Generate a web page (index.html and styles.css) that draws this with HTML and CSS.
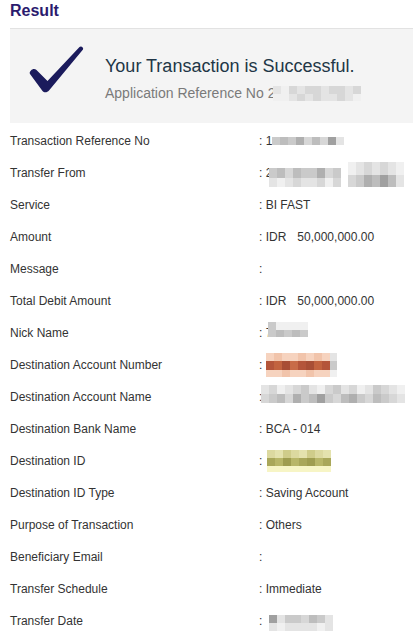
FILE: index.html
```html
<!DOCTYPE html>
<html>
<head>
<meta charset="utf-8">
<link rel="stylesheet" href="styles.css">
</head>
<body>
<div class="page">
  <h1 class="title">Result</h1>
  <div class="banner">
    <svg class="check" width="58" height="50" viewBox="0 0 58 50">
      <path d="M3,25.5 C4.5,23.5 7,23.5 8.5,25 L19.5,36 L51.5,2 C53,0.5 56,2.5 55,4.5 L21,45.5 C19.5,47.5 16,48 14.5,46 L2,29 C1.2,27.8 2,26.5 3,25.5 Z" fill="#1b1b5c"/>
    </svg>
    <div class="msg">
      <div class="msg-title">Your Transaction is Successful.</div>
      <div class="msg-sub">Application Reference No 2<span class="pix px-app"><span class="grid"><i class="b"></i><i class="a"></i><i class="c"></i><i class="b"></i><i class="c"></i><i class="c"></i><i class="b"></i><i class="c"></i><i class="c"></i><i class="b"></i><i class="c"></i><i class="a"></i><i class="a"></i><i class="b"></i><i class="c"></i><i class="b"></i><i class="c"></i><i class="b"></i><i class="b"></i><i class="c"></i><i class="b"></i><i class="a"></i></span></span></div>
    </div>
  </div>

  <div class="rows">
    <div class="row"><div class="label">Transaction Reference No</div><div class="value">: 1<span class="pix px-trn"><span class="grid"><i class="d"></i><i class="e"></i><i class="d"></i><i class="f"></i><i class="c"></i><i class="e"></i><i class="c"></i><i class="g"></i><i class="b"></i></span></span></div></div>

    <div class="row"><div class="label">Transfer From</div><div class="value">: 2<span class="pix px-tfa"><span class="grid"><i class="d"></i><i class="e"></i><i class="c"></i><i class="e"></i><i class="d"></i><i class="d"></i><i class="f"></i><i class="c"></i><i class="d"></i><i class="b"></i><i class="a"></i><i class="b"></i><i class="c"></i><i class="b"></i><i class="b"></i><i class="c"></i><i class="a"></i><i class="c"></i></span></span><span class="pix px-tfb"><span class="grid"><i class="a"></i><i class="b"></i><i class="c"></i><i class="b"></i><i class="c"></i><i class="b"></i><i class="a"></i><i class="c"></i><i class="d"></i><i class="f"></i><i class="e"></i><i class="g"></i><i class="e"></i><i class="b"></i></span></span></div></div>

    <div class="row"><div class="label">Service</div><div class="value">: BI FAST</div></div>

    <div class="row"><div class="label">Amount</div><div class="value">: IDR<span class="amt">50,000,000.00</span></div></div>

    <div class="row"><div class="label">Message</div><div class="value">:</div></div>

    <div class="row"><div class="label">Total Debit Amount</div><div class="value">: IDR<span class="amt">50,000,000.00</span></div></div>

    <div class="row"><div class="label">Nick Name</div><div class="value">: 7<span class="pix px-nick"><span class="grid"><i class="d"></i><i class="a"></i><i class="a"></i><i class="a"></i><i class="a"></i><i class="d"></i><i class="e"></i><i class="d"></i><i class="e"></i><i class="d"></i></span></span></div></div>

    <div class="row"><div class="label">Destination Account Number</div><div class="value">: <span class="pix px-accno"><span class="grid"><i class="pk1"></i><i class="pk2"></i><i class="pk1"></i><i class="pk1"></i><i class="pk2"></i><i class="pk1"></i><i class="pk2"></i><i class="pk1"></i><i class="b"></i><i class="br1"></i><i class="br2"></i><i class="br3"></i><i class="br4"></i><i class="br1"></i><i class="br3"></i><i class="br2"></i><i class="br1"></i><i class="d"></i><i class="pk1"></i><i class="pk1"></i><i class="pk2"></i><i class="pk1"></i><i class="pk1"></i><i class="pk2"></i><i class="pk1"></i><i class="pk1"></i><i class="a"></i></span></span></div></div>

    <div class="row"><div class="label">Destination Account Name</div><div class="value">:<span class="pix px-accname"><span class="grid"><i class="b"></i><i class="c"></i><i class="a"></i><i class="b"></i><i class="c"></i><i class="d"></i><i class="b"></i><i class="a"></i><i class="c"></i><i class="d"></i><i class="b"></i><i class="c"></i><i class="a"></i><i class="b"></i><i class="d"></i><i class="c"></i><i class="b"></i><i class="a"></i><i class="c"></i><i class="d"></i><i class="e"></i><i class="c"></i><i class="f"></i><i class="d"></i><i class="e"></i><i class="g"></i><i class="d"></i><i class="c"></i><i class="e"></i><i class="f"></i><i class="d"></i><i class="c"></i><i class="e"></i><i class="d"></i><i class="c"></i><i class="b"></i></span></span></div></div>

    <div class="row"><div class="label">Destination Bank Name</div><div class="value">: BCA - 014</div></div>

    <div class="row"><div class="label">Destination ID</div><div class="value">: <span class="pix px-id"><span class="grid"><i class="y1"></i><i class="y2"></i><i class="y3"></i><i class="y1"></i><i class="y2"></i><i class="y3"></i><i class="y1"></i><i class="y2"></i><i class="ol1"></i><i class="ol2"></i><i class="ol3"></i><i class="ol2"></i><i class="ol1"></i><i class="ol3"></i><i class="ol2"></i><i class="ol1"></i><i class="py"></i><i class="py"></i><i class="py"></i><i class="py"></i><i class="py"></i><i class="py"></i><i class="py"></i><i class="py"></i></span></span></div></div>

    <div class="row"><div class="label">Destination ID Type</div><div class="value">: Saving Account</div></div>

    <div class="row"><div class="label">Purpose of Transaction</div><div class="value">: Others</div></div>

    <div class="row"><div class="label">Beneficiary Email</div><div class="value">:</div></div>

    <div class="row"><div class="label">Transfer Schedule</div><div class="value">: Immediate</div></div>

    <div class="row"><div class="label">Transfer Date</div><div class="value">: <span class="pix px-date"><span class="grid"><i class="g"></i><i class="b"></i><i class="d"></i><i class="d"></i><i class="c"></i><i class="e"></i><i class="d"></i><i class="b"></i><i class="b"></i><i class="a"></i><i class="b"></i><i class="b"></i><i class="b"></i><i class="b"></i><i class="a"></i><i class="b"></i></span></span></div></div>
  </div>
</div>
</body>
</html>
```

FILE: styles.css
```css
html, body {
  margin: 0;
  padding: 0;
  background: #ffffff;
}

body {
  font-family: "Liberation Sans", Arial, sans-serif;
  color: #333333;
  overflow: hidden;
}

.page {
  padding-left: 10px;
}

.title {
  margin: 0;
  padding-top: 1px;
  font-size: 16px;
  line-height: 20px;
  font-weight: bold;
  color: #2b1b6e;
}

.banner {
  margin-top: 7px;
  height: 94px;
  border-top: 1px solid #e2e2e2;
  background: #f4f4f4;
  display: flex;
  align-items: flex-start;
}

.check {
  display: block;
  flex: none;
  margin-top: 16px;
  margin-left: 18px;
}

.msg {
  margin-top: 26px;
  margin-left: 19px;
}

.msg-title {
  font-size: 18px;
  line-height: 22px;
  color: #213646;
}

.msg-sub {
  margin-top: 7px;
  font-size: 14px;
  line-height: 18px;
  color: #7a7a7a;
}

.rows {
  margin-top: 2px;
}

.row {
  display: flex;
  height: 32px;
  font-size: 12px;
  line-height: 32px;
}

.label {
  width: 249px;
  flex: none;
  color: #333333;
}

.value {
  color: #333333;
  white-space: nowrap;
}

.amt {
  margin-left: 11px;
}

/* pixelated (blurred) data blocks */
.pix {
  display: inline-block;
  overflow: hidden;
  line-height: 0;
}

.pix .grid {
  display: grid;
}

.pix i {
  display: block;
}

.px-app { margin-left: -2px; vertical-align: -3px; }
.px-app .grid { grid-template-columns: repeat(11, 8px); grid-auto-rows: 7.5px; }

.px-trn { margin-left: 0; vertical-align: 0; }
.px-trn .grid { grid-template-columns: repeat(9, 8px); grid-auto-rows: 8px; }

.px-tfa { margin-left: -3px; vertical-align: -10px; }
.px-tfa .grid { grid-template-columns: repeat(9, 8px); grid-auto-rows: 9.5px; }

.px-tfb { margin-left: 7px; vertical-align: -10px; }
.px-tfb .grid { grid-template-columns: repeat(7, 8px); grid-auto-rows: 12.5px; }

.px-nick { margin-left: -4px; vertical-align: 0; }
.px-nick .grid { grid-template-columns: repeat(5, 8px); grid-auto-rows: 7.5px; }

.px-accno { margin-left: 0; vertical-align: -8px; }
.px-accno .grid { grid-template-columns: repeat(8, 8px) 7px; grid-template-rows: 8px 9px 7px; }

.px-accname { margin-left: -1px; vertical-align: -2px; }
.px-accname .grid { grid-template-columns: repeat(18, 8px); grid-auto-rows: 9px; }

.px-id { margin-left: 1px; vertical-align: -7px; }
.px-id .grid { grid-template-columns: repeat(8, 8px); grid-template-rows: 8px 8px 6px; }

.px-date { margin-left: 3px; vertical-align: -6px; }
.px-date .grid { grid-template-columns: repeat(8, 8px); grid-auto-rows: 8px; }

/* gray shades */
.a { background: #f0f0f0; }
.b { background: #e4e4e4; }
.c { background: #d7d7d7; }
.d { background: #cacaca; }
.e { background: #bdbdbd; }
.f { background: #afafaf; }
.g { background: #a0a0a0; }

/* peach / brown */
.pk1 { background: #f6d3bf; }
.pk2 { background: #f1c4ab; }
.br1 { background: #b4553a; }
.br2 { background: #c2633f; }
.br3 { background: #a84e35; }
.br4 { background: #c86c48; }

/* yellow / olive */
.y1 { background: #dcd9a0; }
.y2 { background: #e4e2ae; }
.y3 { background: #cfcc8a; }
.ol1 { background: #a9a75a; }
.ol2 { background: #b8b668; }
.ol3 { background: #9f9d50; }
.py { background: #f7f5c6; }
```
